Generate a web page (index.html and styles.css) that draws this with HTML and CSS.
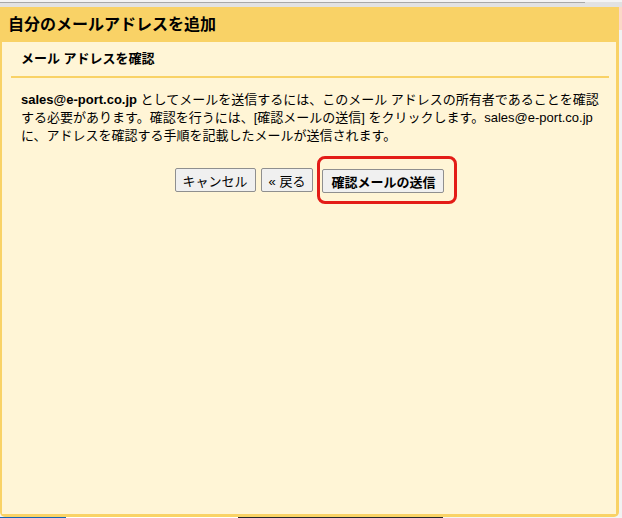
FILE: index.html
```html
<!DOCTYPE html>
<html>
<head>
    <title>自分のメールアドレスを追加</title>
    <link rel="stylesheet" href="styles.css">
</head>
<body>
    <div class="topbar"><div class="topbar-line"></div></div>
    <div class="page">
        <div class="dialog">
            <div class="dialog-title">自分のメールアドレスを追加</div>
            <div class="panel">
                <h3 class="panel-heading">メール アドレスを確認</h3>
                <p class="message">
                    <b>sales@e-port.co.jp</b> としてメールを送信するには、このメール アドレスの所有者であることを確認<br>
                    する必要があります。確認を行うには、[確認メールの送信] をクリックします。sales@e-port.co.jp<br>
                    に、アドレスを確認する手順を記載したメールが送信されます。
                </p>
                <div class="actions">
                    <button class="btn">キャンセル</button>
                    <button class="btn">« 戻る</button>
                    <span class="highlight">
                        <button class="btn btn-primary">確認メールの送信</button>
                    </span>
                </div>
            </div>
        </div>
        <div class="side-strip">
            <div class="side-peach"></div>
        </div>
    </div>
    <div class="bottom-strip">
        <div class="seg-blue"></div>
        <div class="seg-white"></div>
        <div class="seg-dark"></div>
    </div>
</body>
</html>
```

FILE: styles.css
```css
body {
    margin: 0;
    width: 622px;
    height: 518px;
    overflow: hidden;
    background: #f4f4f4;
    font-family: "Liberation Sans", Arial, "Noto Sans CJK JP", sans-serif;
    color: #000;
}

.topbar {
    height: 5px;
    background: #e2e2e2;
}

.topbar-line {
    width: 585px;
    height: 1px;
    margin-top: 2px;
    background: #a8a8a8;
}

.page {
    display: flex;
    height: 510px;
}

.dialog {
    width: 619px;
    background: #f9d266;
    border-radius: 0 0 5px 5px;
    display: flex;
    flex-direction: column;
    padding: 0 3px 3px 2px;
    box-sizing: border-box;
}

.dialog-title {
    height: 35px;
    line-height: 36px;
    padding-left: 6px;
    font-size: 16px;
    font-weight: bold;
}

.panel {
    flex: 1;
    background: #fff5d6;
    padding: 0 7px 0 9px;
}

.panel-heading {
    margin: 0;
    padding: 9px 0 0 10px;
    height: 25px;
    border-bottom: 2px solid #f9d266;
    font-size: 13px;
    font-weight: bold;
    line-height: 16px;
}

.message {
    margin: 13px 0 0 10px;
    font-size: 13px;
    line-height: 18px;
}

.actions {
    display: flex;
    justify-content: center;
    align-items: center;
    gap: 5px;
    margin-top: 11px;
    padding-left: 12px;
}

.btn {
    font-family: "Liberation Sans", Arial, "Noto Sans CJK JP", sans-serif;
    font-size: 13px;
    height: 24px;
    padding: 0 7px;
    background: #f0f0f0;
    border: 1px solid #8f8f8f;
    border-radius: 2px;
    color: #000;
}

.btn-primary {
    font-weight: bold;
    padding: 0 8px;
}

.highlight {
    display: inline-flex;
    padding: 10px 10px 8px 2px;
    border: 3px solid #e31c17;
    border-radius: 8px;
    margin-left: -1px;
}

.side-strip {
    width: 3px;
    background: #f2f2f2;
}

.side-peach {
    height: 23px;
    background: #fcd9c8;
}

.bottom-strip {
    display: flex;
    height: 3px;
}

.seg-blue {
    width: 66px;
    background: #1463b4;
}

.seg-white {
    width: 172px;
    background: #fff;
}

.seg-dark {
    width: 205px;
    background: #22262c;
}
```
